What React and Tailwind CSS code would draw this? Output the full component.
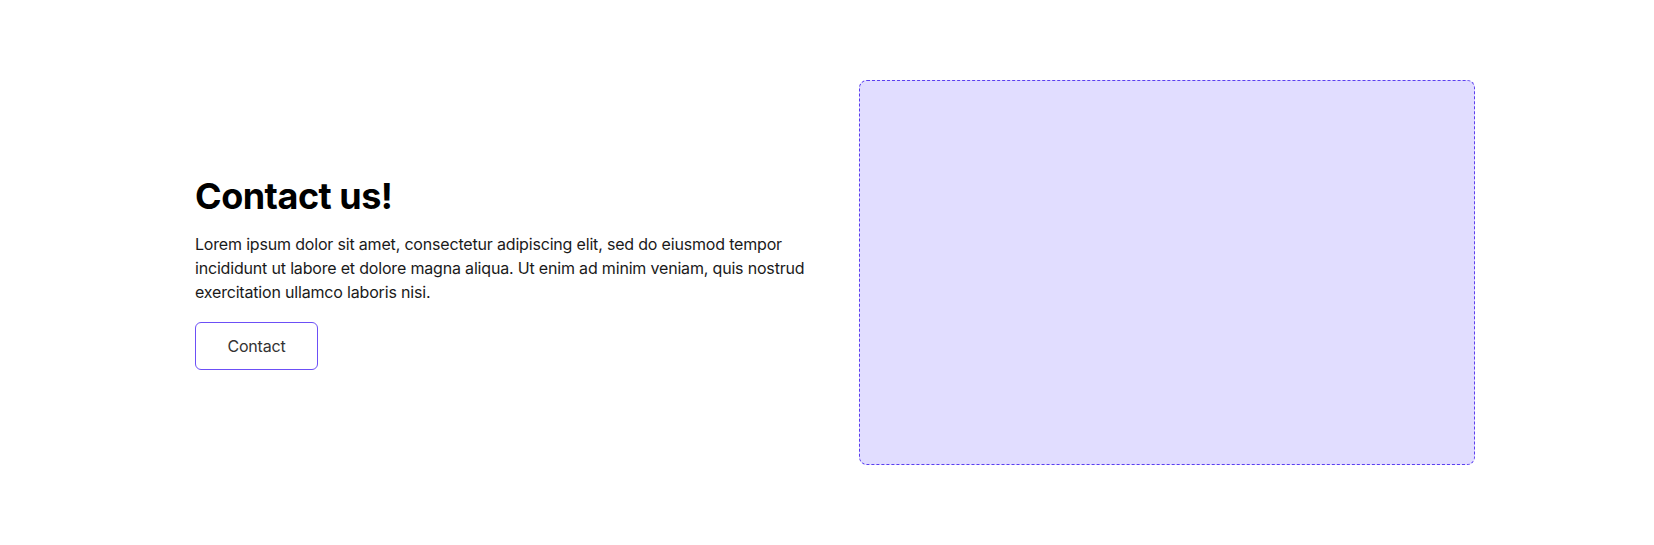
export default function App() {
  return (
    <div className="w-full h-[545px] bg-white flex items-center" style={{ fontFamily: 'Inter, "Liberation Sans", sans-serif' }}>
      <div className="ml-[195px] w-[1280px] grid grid-cols-2 gap-12 items-center">
        <div className="flex flex-col">
          <h1 className="text-[36px] leading-[40px] font-bold text-black tracking-[-0.5px]">Contact us!</h1>
          <p className="mt-4 text-[16px] leading-[24px] text-[#1a1a1a] tracking-[-0.18px]">
            Lorem ipsum dolor sit amet, consectetur adipiscing elit, sed do eiusmod tempor<br />
            incididunt ut labore et dolore magna aliqua. Ut enim ad minim veniam, quis nostrud<br />
            exercitation ullamco laboris nisi.
          </p>
          <div className="mt-[18px]">
            <button className="w-[123px] h-[48px] rounded-md border border-[#6c4ff6] text-[16px] text-[#333333] bg-white tracking-[-0.2px]">Contact</button>
          </div>
        </div>
        <div className="h-[385px] rounded-lg border border-dashed border-[#5b3ff0] bg-[#e1ddff]"></div>
      </div>
    </div>
  );
}
